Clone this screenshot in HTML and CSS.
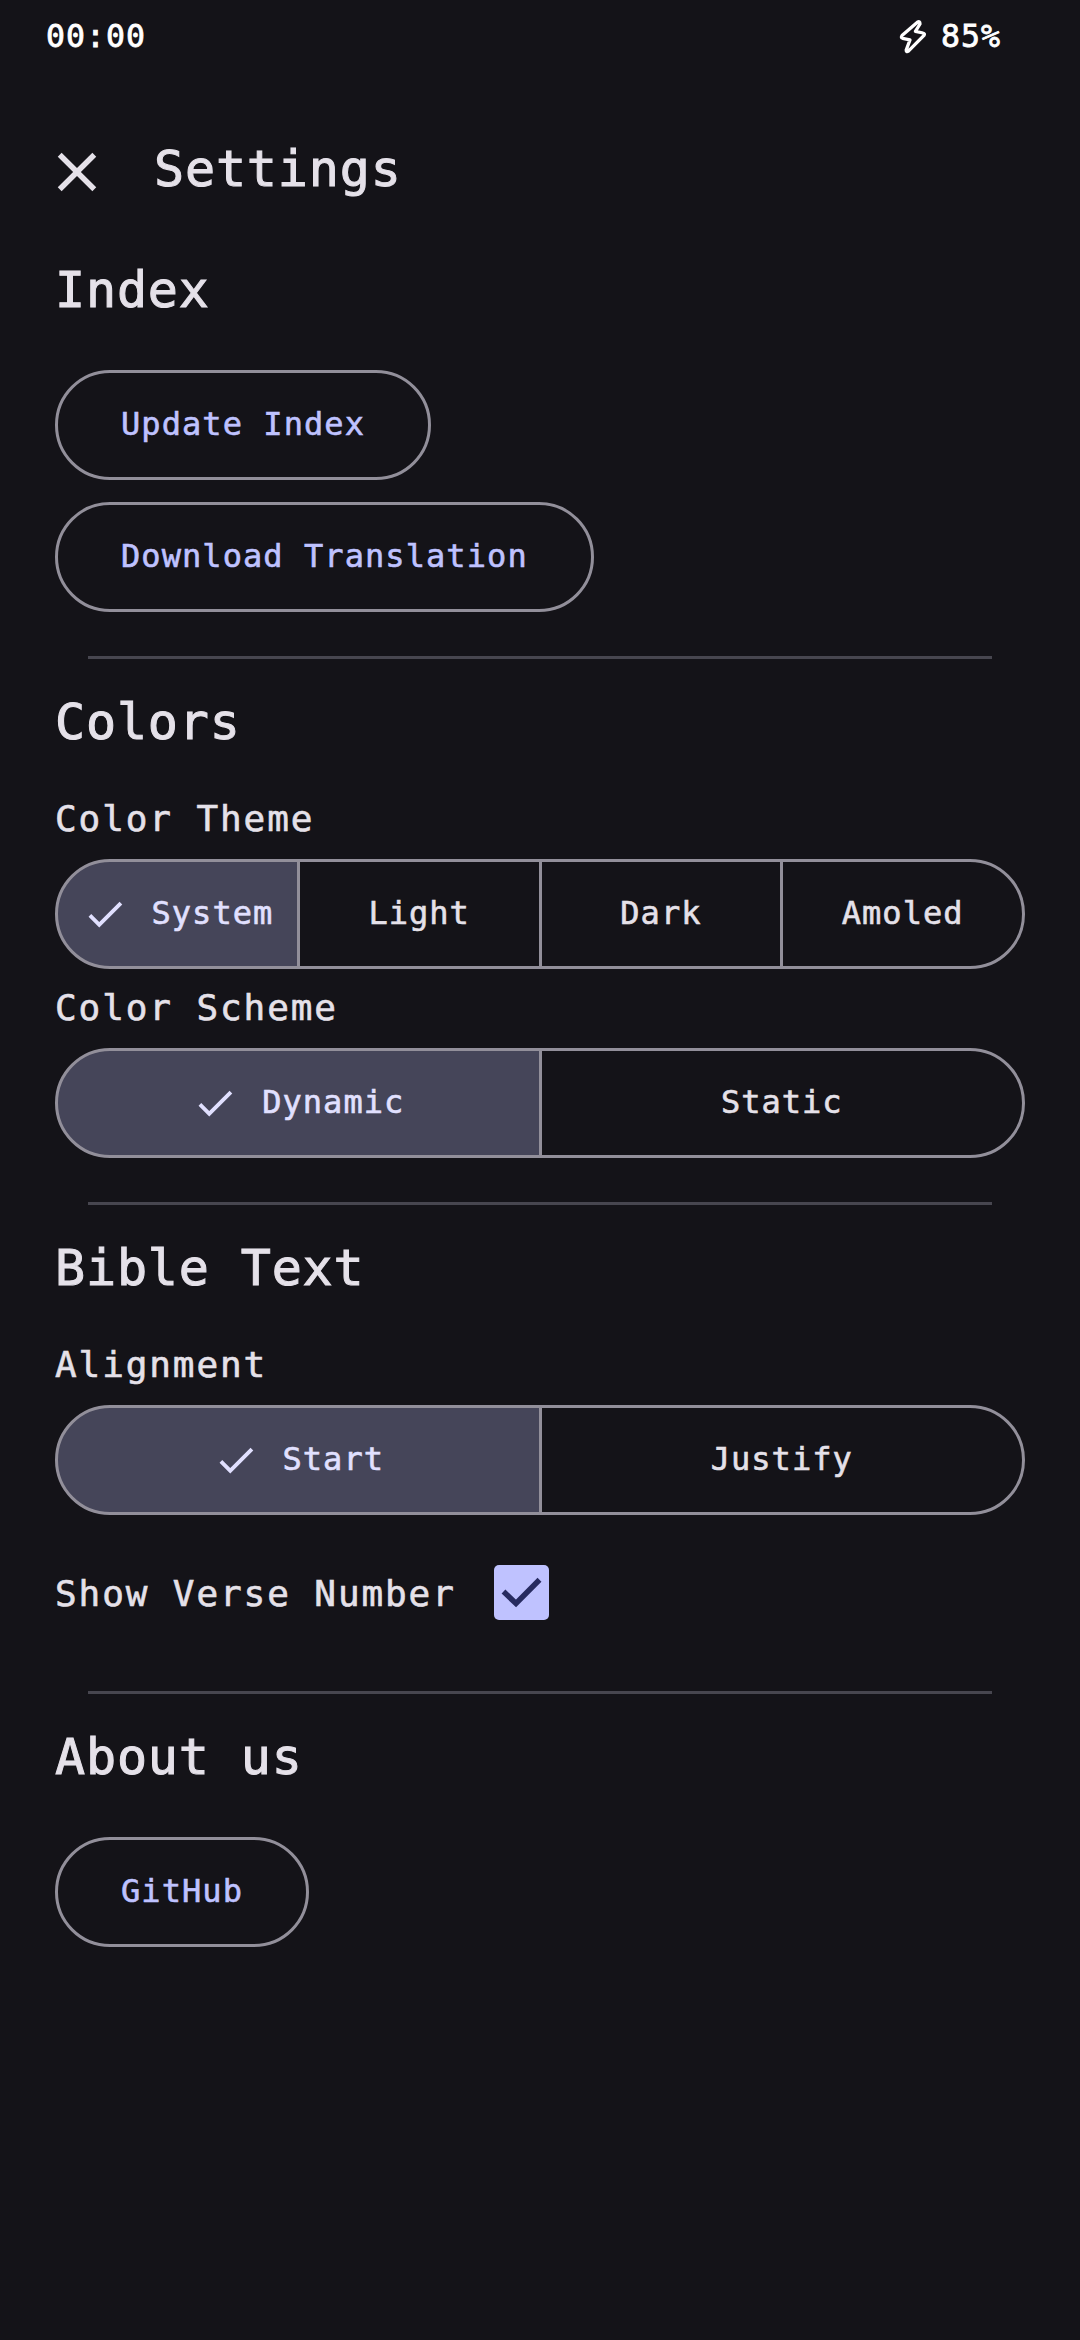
FILE: index.html
```html
<!DOCTYPE html>
<html lang="en">
<head>
<meta charset="utf-8">
<title>Settings</title>
<link rel="stylesheet" href="styles.css">
</head>
<body>
<svg class="sprite" aria-hidden="true">
  <symbol id="check" viewBox="0 0 24 24"><path d="M9 16.17 4.83 12l-1.42 1.41L9 19 21 7l-1.41-1.41z"/></symbol>
</svg>
<header class="status">
  <span>00:00</span>
  <span class="battery">
    <svg class="bolt" viewBox="0 0 28 36"><path d="M18.4 3.2 3 16.6Q1.6 18.6 3.6 19.3L11 20.8 7.2 31Q7.2 33.6 9.4 32.2L25 16.4Q26.2 14.4 24 14L16.4 12.4 21 5Q21 1.6 18.4 3.2Z"/></svg>
    <span>85%</span>
  </span>
</header>
<nav class="topbar">
  <svg class="close" viewBox="0 0 24 24"><path d="M19 6.41 17.59 5 12 10.59 6.41 5 5 6.41 10.59 12 5 17.59 6.41 19 12 13.41 17.59 19 19 17.59 13.41 12z"/></svg>
  <h1 class="title">Settings</h1>
</nav>
<main class="content">
  <section class="section">
    <h2 class="title">Index</h2>
    <div class="buttons">
      <button class="button">Update Index</button>
      <button class="button">Download Translation</button>
    </div>
  </section>
  <hr class="divider">
  <section class="section">
    <h2 class="title">Colors</h2>
    <div class="option">
      <div class="label">Color Theme</div>
      <div class="segments">
        <div class="segment selected"><svg class="check"><use href="#check"/></svg>System</div>
        <div class="segment">Light</div>
        <div class="segment">Dark</div>
        <div class="segment">Amoled</div>
      </div>
    </div>
    <div class="option">
      <div class="label">Color Scheme</div>
      <div class="segments">
        <div class="segment selected"><svg class="check"><use href="#check"/></svg>Dynamic</div>
        <div class="segment">Static</div>
      </div>
    </div>
  </section>
  <hr class="divider">
  <section class="section">
    <h2 class="title">Bible Text</h2>
    <div class="option">
      <div class="label">Alignment</div>
      <div class="segments">
        <div class="segment selected"><svg class="check"><use href="#check"/></svg>Start</div>
        <div class="segment">Justify</div>
      </div>
    </div>
    <div class="toggle">
      <span class="label">Show Verse Number</span>
      <span class="checkbox"><svg viewBox="0 0 55 55"><path d="M9.5 26.5 22 38.5 45.5 14.8"/></svg></span>
    </div>
  </section>
  <hr class="divider divider-after-toggle">
  <section class="section">
    <h2 class="title">About us</h2>
    <div class="buttons">
      <button class="button">GitHub</button>
    </div>
  </section>
</main>
</body>
</html>
```
FILE: styles.css
```css
* { box-sizing: border-box; }

body {
  margin: 0;
  min-height: 2340px;
  background: #141318;
  color: #e5e1e9;
  font-family: "DejaVu Sans Mono", monospace;
  -webkit-text-stroke: 0.6px currentColor;
}

.sprite { display: block; width: 0; height: 0; }

.status {
  display: flex;
  justify-content: space-between;
  align-items: center;
  height: 72px;
  padding: 0 79px 1px 46px;
  color: #fff;
  font-size: 31.5px;
  letter-spacing: 1.04px;
  -webkit-text-stroke-width: 0.8px;
}

.battery { display: flex; align-items: center; gap: 14px; }

.bolt {
  width: 28px;
  height: 36px;
  margin-top: 2px;
  fill: none;
  stroke: #fff;
  stroke-width: 3.3;
  stroke-linejoin: round;
}

.topbar {
  display: flex;
  align-items: center;
  gap: 44px;
  height: 65px;
  margin-top: 66px;
  padding-left: 44px;
}

.close { width: 66px; height: 66px; margin-top: 3px; fill: #e5e1e9; }

.title {
  margin: 0;
  padding-bottom: 3px;
  font-size: 50px;
  font-weight: 400;
  line-height: 62px;
  letter-spacing: 0.85px;
  -webkit-text-stroke-width: 1px;
}

.content { padding: 56px 55px 0; }

.buttons {
  display: flex;
  flex-direction: column;
  align-items: flex-start;
  gap: 22px;
  margin-top: 46px;
}

.button {
  height: 110px;
  padding: 0 63px 3px;
  border: 3px solid #928f9a;
  border-radius: 55px;
  background: none;
  color: #bfc2ff;
  font: 32px "DejaVu Sans Mono", monospace;
  letter-spacing: 1.07px;
  -webkit-text-stroke: 0.6px currentColor;
}

.divider {
  height: 3px;
  margin: 44px 33px 32px;
  border: 0;
  background: #47464f;
}

.divider-after-toggle { margin-top: 33px; }

.label {
  font-size: 36px;
  line-height: 50px;
  letter-spacing: 1.9px;
}

.option { margin-top: 38px; }
.option + .option { margin-top: 14px; }

.segments { display: flex; margin-top: 15px; }

.segment {
  display: flex;
  flex: 1 1 0;
  align-items: center;
  justify-content: center;
  gap: 24px;
  height: 110px;
  padding-bottom: 3px;
  border: 3px solid #928f9a;
  font-size: 32px;
  letter-spacing: 1px;
}

.segment + .segment { margin-left: -3px; }
.segment:first-child { border-radius: 55px 0 0 55px; }
.segment:last-child { border-radius: 0 55px 55px 0; }
.selected { background: #454559; color: #e1e0ff; }

.check { width: 46px; height: 46px; margin-top: 3px; fill: currentColor; }

.toggle {
  display: flex;
  align-items: center;
  gap: 38px;
  height: 132px;
  margin-top: 11px;
}

.toggle .label { padding-top: 4px; }

.checkbox {
  width: 55px;
  height: 55px;
  margin-top: 1px;
  border-radius: 5px;
  background: #bfc2ff;
}

.checkbox svg {
  display: block;
  fill: none;
  stroke: #272b60;
  stroke-width: 5.5;
}
```
